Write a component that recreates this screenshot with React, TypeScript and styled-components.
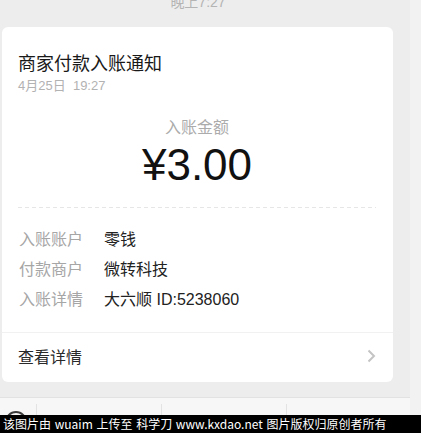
import React from 'react';
import styled, { createGlobalStyle } from 'styled-components';

const GlobalStyle = createGlobalStyle`
  html, body {
    margin: 0;
    padding: 0;
    background: #ededed;
    overflow: hidden;
  }
  body {
    font-family: "Liberation Sans", "Noto Sans CJK SC", sans-serif;
    -webkit-font-smoothing: antialiased;
  }
`;

const Page = styled.div`
  width: 421px;
  height: 433px;
  display: flex;
  flex-direction: column;
  overflow: hidden;
`;

const Body = styled.div`
  flex: 1;
  display: flex;
  min-height: 0;
`;

const Chat = styled.div`
  width: 410px;
  display: flex;
  flex-direction: column;
  background: #ededed;
`;

const SideStrip = styled.div`
  flex: 1;
  background: #f2f2f2;
`;

const TimeRow = styled.div`
  height: 27px;
  display: flex;
  justify-content: center;
  align-items: flex-start;
  overflow: hidden;
`;

const TimeText = styled.span`
  margin-top: -6px;
  margin-left: -14px;
  font-size: 14px;
  line-height: 16px;
  color: #b4b4b4;
`;

const Card = styled.div`
  margin-left: 2px;
  width: 391px;
  height: 355px;
  background: #fff;
  border-radius: 6px;
  display: flex;
  flex-direction: column;
  overflow: hidden;
`;

const Header = styled.div`
  padding: 25px 16px 0;
`;

const Title = styled.div`
  font-size: 18px;
  line-height: 24px;
  color: #191919;
`;

const DateText = styled.div`
  font-size: 13px;
  line-height: 18px;
  margin-top: 1px;
  color: #b2b2b2;
`;

const AmountBlock = styled.div`
  margin-top: 22px;
  display: flex;
  flex-direction: column;
  align-items: center;
`;

const AmountLabel = styled.div`
  font-size: 16px;
  line-height: 22px;
  color: #ababab;
  margin-left: -1px;
`;

const Amount = styled.div`
  margin-top: 1px;
  font-size: 44px;
  line-height: 50px;
  color: #111;
  margin-left: -1px;
`;

const Dashed = styled.div`
  margin: 17px 17px 0 16px;
  height: 1px;
  background-image: linear-gradient(to right, #e6e6e6 60%, transparent 0);
  background-size: 7px 1px;
  background-repeat: repeat-x;
`;

const Rows = styled.div`
  padding: 15px 17px 19px;
  border-bottom: 1px solid #f1f1f1;
`;

const Row = styled.div`
  display: flex;
  height: 30px;
  align-items: center;
  font-size: 16px;
`;

const Label = styled.span`
  width: 85px;
  flex-shrink: 0;
  color: #a6a6a6;
`;

const Value = styled.span`
  color: #222;
`;

const Footer = styled.div`
  flex: 1;
  display: flex;
  align-items: center;
  justify-content: space-between;
  padding: 0 17px 3px 16px;
`;

const FooterText = styled.span`
  font-size: 16px;
  color: #2a2a2a;
`;

const Spacer = styled.div`
  height: 15px;
`;

const Toolbar = styled.div`
  flex: 1;
  display: flex;
  border-top: 1px solid #e2e2e2;
  background: #f7f7f7;
  overflow: hidden;
`;

const ToolSlot = styled.div<{ $w: number; $divider?: boolean }>`
  width: ${(p) => p.$w}px;
  flex-shrink: 0;
  position: relative;
  border-right: ${(p) => (p.$divider ? '1px solid #e3e3e3' : 'none')};
  margin-top: 6px;
`;

const VoiceIcon = styled.div`
  position: absolute;
  left: 5px;
  top: 7px;
  width: 22px;
  height: 22px;
  border-radius: 50%;
  border: 2px solid #3a3a3a;
  box-sizing: border-box;
`;

const Banner = styled.div`
  height: 18px;
  background: #000;
  color: #fff;
  font-family: "Noto Sans CJK SC", sans-serif;
  font-size: 12px;
  line-height: 18px;
  padding-left: 3px;
  word-spacing: 1px;
  white-space: pre;
`;

const Chevron = () => (
  <svg width="9" height="14" viewBox="0 0 9 14">
    <polyline
      points="1.5,1.5 7,7 1.5,12.5"
      fill="none"
      stroke="#c4c4c4"
      strokeWidth="2"
    />
  </svg>
);

const details = [
  { label: '入账账户', value: '零钱' },
  { label: '付款商户', value: '微转科技' },
  { label: '入账详情', value: '大六顺 ID:5238060' },
];

export default function App() {
  return (
    <>
      <GlobalStyle />
      <Page>
        <Body>
          <Chat>
            <TimeRow>
              <TimeText>晚上7:27</TimeText>
            </TimeRow>
            <Card>
              <Header>
                <Title>商家付款入账通知</Title>
                <DateText>4月25日&nbsp;&nbsp;19:27</DateText>
              </Header>
              <AmountBlock>
                <AmountLabel>入账金额</AmountLabel>
                <Amount>¥3.00</Amount>
              </AmountBlock>
              <Dashed />
              <Rows>
                {details.map((d) => (
                  <Row key={d.label}>
                    <Label>{d.label}</Label>
                    <Value>{d.value}</Value>
                  </Row>
                ))}
              </Rows>
              <Footer>
                <FooterText>查看详情</FooterText>
                <Chevron />
              </Footer>
            </Card>
            <Spacer />
            <Toolbar>
              <ToolSlot $w={36} $divider>
                <VoiceIcon />
              </ToolSlot>
              <ToolSlot $w={124} $divider />
              <ToolSlot $w={124} $divider />
              <ToolSlot $w={125} />
            </Toolbar>
          </Chat>
          <SideStrip />
        </Body>
        <Banner>{'该图片由 wuaim 上传至 科学刀 www.kxdao.net 图片版权归原创者所有'}</Banner>
      </Page>
    </>
  );
}
